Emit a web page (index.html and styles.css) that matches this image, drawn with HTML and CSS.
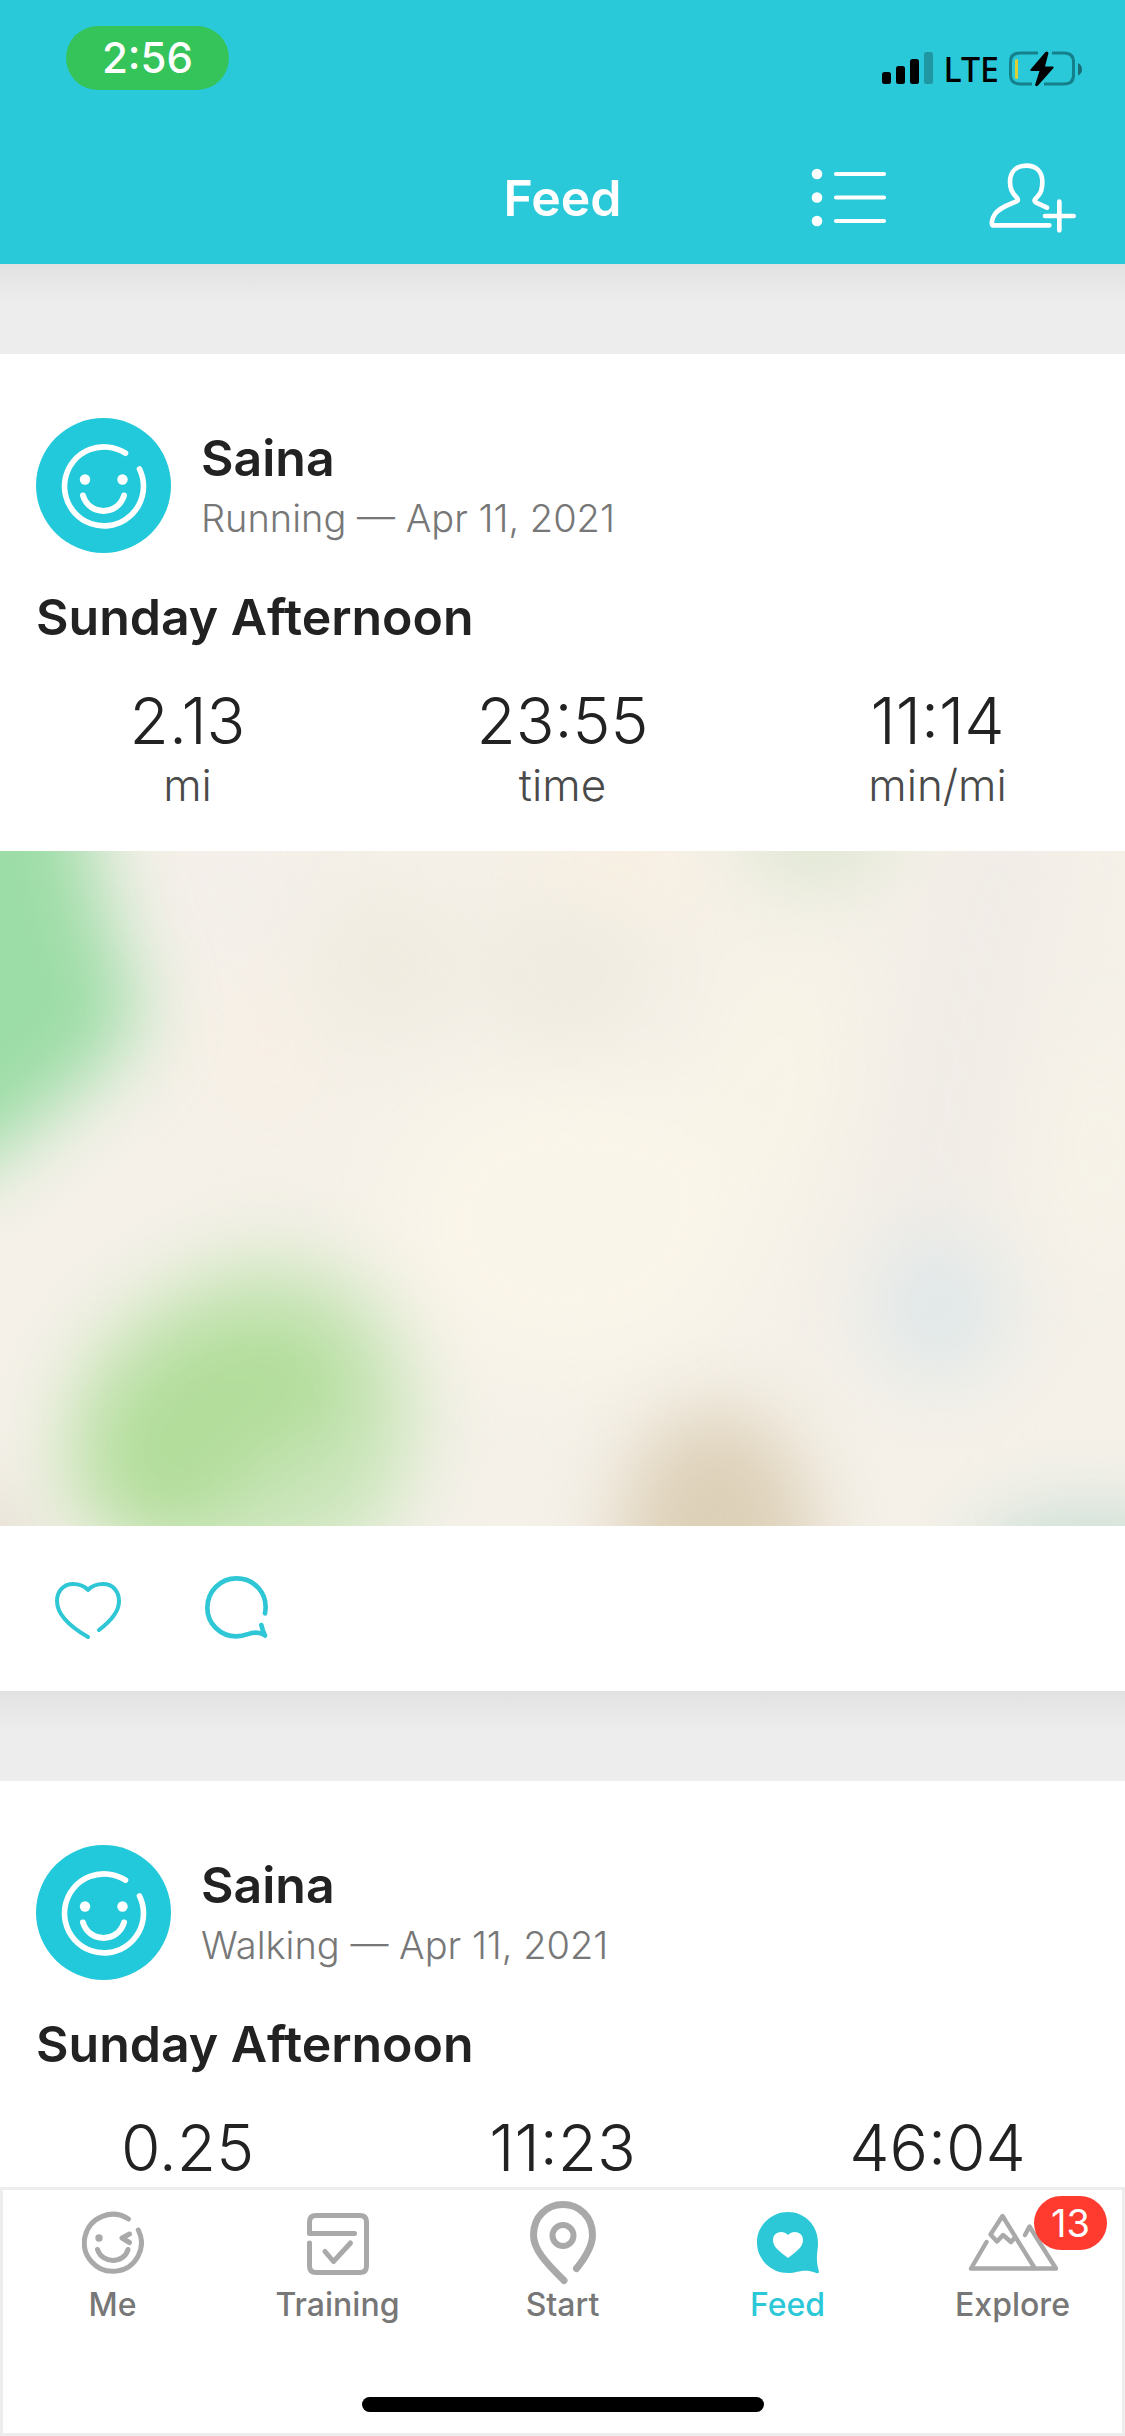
FILE: index.html
```html
<!DOCTYPE html>
<html lang="en">
<head>
<meta charset="utf-8">
<meta name="viewport" content="width=device-width, initial-scale=1">
<title>Feed</title>
<link rel="stylesheet" href="styles.css">
</head>
<body>
<svg class="defs" aria-hidden="true">
  <symbol id="smiley" viewBox="0 0 135 135">
    <circle cx="67.5" cy="67.5" r="67.5" fill="#22c9da"/>
    <g fill="none" stroke="#fff" stroke-width="5.6" stroke-linecap="round">
      <path d="M89.5 35.2A39.5 39.5 0 1 0 103.5 51"/>
      <path d="M47 77.5C53 98 82 98 88 77.5" stroke-width="6"/>
    </g>
    <circle cx="49" cy="61.5" r="5.2" fill="#fff"/>
    <circle cx="86.5" cy="61.5" r="5.2" fill="#fff"/>
  </symbol>
</svg>
<div class="app">
  <header class="header">
    <div class="status">
      <span class="clock">2:56</span>
      <div class="signals">
        <svg width="51" height="36" viewBox="0 0 51 36" aria-hidden="true">
          <rect x="0" y="21" width="9" height="12" rx="2.5"/>
          <rect x="14" y="15" width="9" height="18" rx="2.5"/>
          <rect x="28" y="8" width="9" height="25" rx="2.5"/>
          <rect x="42" y="1" width="9" height="32" rx="2.5" opacity=".25"/>
        </svg>
        <span class="carrier">LTE</span>
        <svg width="74" height="36" viewBox="0 0 74 36" aria-hidden="true">
          <path d="M29 2H11Q1.5 2 1.5 11V24Q1.5 33 11 33H23M43 2H55Q64.5 2 64.5 11V24Q64.5 33 55 33H35" fill="none" stroke="#14808b" stroke-width="3"/>
          <path d="M69 12Q73 14 73 18.5Q73 22.5 69 24.5Z" fill="#1b6d76"/>
          <rect x="6" y="8" width="3" height="20" rx="1.5" fill="#dccf33"/>
          <path d="M36.5 1L21.5 18.5Q21 20 22.5 20H30.5L26 34Q27 36 29 34.5L44.5 17Q45 15.5 43.5 15.5H36L39.5 2Q38.5 -.5 36.5 1Z"/>
        </svg>
      </div>
    </div>
    <div class="navbar">
      <h1 class="navbar-title">Feed</h1>
      <div class="navbar-actions">
        <button class="icon-button" aria-label="List">
          <svg width="76" height="60" viewBox="0 0 76 60" fill="#fff" stroke="#fff" stroke-linecap="round">
            <g stroke="none"><circle cx="6" cy="6" r="5.3"/><circle cx="6" cy="29.5" r="5.3"/><circle cx="6" cy="53" r="5.3"/></g>
            <path d="M25 6H73M25 29.5H73M25 53H73" stroke-width="4.2"/>
          </svg>
        </button>
        <button class="icon-button" aria-label="Add friend">
          <svg width="88" height="72" viewBox="628 485 264 216" fill="none" stroke="#fff" stroke-width="14" stroke-linecap="round" stroke-linejoin="round">
            <path d="M809 675H640C634 675 636 655 646 641C661 620 688 613 711 603C718 599 713 593 708 588C695 575 691 562 691 545C691 513 711 496 740 496C769 496 788 513 788 545C788 562 784 579 774 588C766 596 761 601 768 606L802 622M839 604V690M796 647H882"/>
          </svg>
        </button>
      </div>
    </div>
  </header>

  <main class="feed">
    <article class="card">
      <div class="card-body">
        <div class="author">
          <svg class="avatar" aria-hidden="true"><use href="#smiley"/></svg>
          <div>
            <h2 class="name">Saina</h2>
            <p class="meta">Running — Apr 11, 2021</p>
          </div>
        </div>
        <h3 class="title">Sunday Afternoon</h3>
      </div>
      <dl class="stats">
        <div class="stat"><dd class="value">2.13</dd><dt class="unit">mi</dt></div>
        <div class="stat"><dd class="value">23:55</dd><dt class="unit">time</dt></div>
        <div class="stat"><dd class="value">11:14</dd><dt class="unit">min/mi</dt></div>
      </dl>
      <svg class="map" viewBox="0 0 1125 675" preserveAspectRatio="none" role="img" aria-label="Route map">
        <defs>
          <filter id="soft" x="-80%" y="-80%" width="260%" height="260%" color-interpolation-filters="sRGB"><feGaussianBlur stdDeviation="38"/></filter>
          <filter id="softer" x="-80%" y="-80%" width="260%" height="260%" color-interpolation-filters="sRGB"><feGaussianBlur stdDeviation="50"/></filter>
        </defs>
        <rect width="1125" height="675" fill="#f5f1e9"/>
        <g filter="url(#softer)">
          <ellipse cx="570" cy="370" rx="190" ry="160" fill="#faf5e9"/>
          <ellipse cx="780" cy="210" rx="60" ry="130" fill="#f8f4e6"/>
          <ellipse cx="620" cy="20" rx="100" ry="50" fill="#faf0e1"/>
          <ellipse cx="265" cy="200" rx="40" ry="80" fill="#f9efe3"/>
          <ellipse cx="230" cy="40" rx="80" ry="60" fill="#f3eeea"/>
          <ellipse cx="1100" cy="300" rx="50" ry="130" fill="#f7f3e8"/>
        </g>
        <g filter="url(#soft)">
          <ellipse cx="387" cy="112" rx="70" ry="70" fill="#efebdf"/>
          <ellipse cx="565" cy="122" rx="85" ry="70" fill="#efebe0"/>
          <path d="M1020-40C970 90 960 200 930 350L900 520" fill="none" stroke="#f0ebe6" stroke-width="100"/>
          <ellipse cx="818" cy="-15" rx="75" ry="45" fill="#dce6d0"/>
          <path d="M-120-100H75C90 20 110 90 140 160C120 220 40 260 -20 320H-120Z" fill="#9cdca6"/>
          <ellipse cx="940" cy="458" rx="70" ry="75" fill="#e0e8e9"/>
          <ellipse cx="1090" cy="725" rx="120" ry="65" fill="#c5ddd4"/>
          <ellipse cx="-20" cy="695" rx="50" ry="45" fill="#e0d8cb"/>
        </g>
        <g filter="url(#soft)">
          <path d="M70 650C45 560 90 480 160 445C230 390 330 395 380 460C435 540 420 620 370 690C300 730 120 740 70 650Z" fill="#c9e5b9"/>
          <path d="M90 640C80 560 140 480 260 465C370 480 380 570 300 590C240 600 220 700 150 690Z" fill="#acdb92" opacity=".8"/>
          <path d="M615 760C610 620 650 560 717 560C785 560 820 620 820 760Z" fill="#ddd0b8"/>
        </g>
      </svg>
      <div class="actions">
        <button class="icon-button" aria-label="Like">
          <svg width="68" height="64" viewBox="162 222 204 192" fill="none" stroke="#2fc7d6" stroke-width="12" stroke-linecap="round" stroke-linejoin="round">
            <path d="M264 408C205 374 171 336 171 300C171 269 192 249 219 249C238 249 254 256 264 267C274 256 290 249 309 249C338 249 357 270 357 301C357 332 329 363 297 387"/>
          </svg>
        </button>
        <button class="icon-button" aria-label="Comment">
          <svg width="66" height="64" viewBox="612 222 198 192" fill="none" stroke="#2fc7d6" stroke-width="14" stroke-linecap="round" stroke-linejoin="round">
            <path d="M795 337C806 277 762 232 710 232C660 232 622 272 622 320C622 368 661 406 709 406C744 406 748 390 778 396Q789 398 795 404Q788 390 784 372"/>
          </svg>
        </button>
      </div>
    </article>

    <article class="card">
      <div class="card-body">
        <div class="author">
          <svg class="avatar" aria-hidden="true"><use href="#smiley"/></svg>
          <div>
            <h2 class="name">Saina</h2>
            <p class="meta">Walking — Apr 11, 2021</p>
          </div>
        </div>
        <h3 class="title">Sunday Afternoon</h3>
      </div>
      <ul class="stats">
        <li class="value">0.25</li>
        <li class="value">11:23</li>
        <li class="value">46:04</li>
      </ul>
    </article>
  </main>

  <nav class="tabbar">
    <div class="tabs">
      <a class="tab" href="#me">
        <svg class="tab-icon" width="62" height="84" viewBox="0 -11 62 84" fill="none" stroke="#a9a9a9" stroke-width="5" stroke-linecap="round" stroke-linejoin="round">
          <path d="M46.5 7A28.5 28.5 0 1 0 56.3 18M47.5 22L40 26L47.5 30.5M15.5 37.5C20 52 42 52 46 37.5"/>
          <circle cx="17" cy="26" r="3.7" fill="#a9a9a9" stroke="none"/>
        </svg>
        Me
      </a>
      <a class="tab" href="#training">
        <svg class="tab-icon" width="62" height="84" viewBox="0 -12 62 84" fill="none" stroke="#a9a9a9" stroke-width="5" stroke-linecap="round" stroke-linejoin="round">
          <path d="M47.5 20.5H2.5V9Q2.5 2.5 9 2.5H53Q59.5 2.5 59.5 9V53Q59.5 59.5 53 59.5H9Q2.5 59.5 2.5 53V30M18 38.5L26.5 48.5L43.5 30"/>
        </svg>
        Training
      </a>
      <a class="tab" href="#start">
        <svg class="tab-icon" width="66" height="84" viewBox="0 0 66 84" fill="none" stroke="#a9a9a9" stroke-width="7" stroke-linecap="round">
          <path d="M34 79.5C15 61 3.5 48 3.5 34C3.5 16 16.5 3.5 33 3.5C49.5 3.5 62.5 16 62.5 34C62.5 46 55 57 46.5 67.5"/>
          <circle cx="33" cy="34.5" r="10.5" stroke-width="6"/>
        </svg>
        Start
      </a>
      <a class="tab tab-active" href="#feed" aria-current="page">
        <svg class="tab-icon" width="62" height="84" viewBox="0 -11 62 84">
          <path d="M31 0C48 0 61 13.5 61 31C61 40 58 45 62 60Q61.5 62 59.5 61C46 56 42 61 31 61C14 61 0 47.5 0 30.5C0 13.5 14 0 31 0Z" fill="#2cc8d8"/>
          <path d="M31 46C22 39 16 35 16 28C16 20 26 17.5 31 23C36 17.5 46 20 46 28C46 35 40 39 31 46Z" fill="#fff"/>
        </svg>
        Feed
      </a>
      <a class="tab" href="#explore">
        <svg class="tab-icon" width="90" height="84" viewBox="0 -12 90 84" fill="none" stroke="#a9a9a9" stroke-width="4.4" stroke-linecap="round" stroke-linejoin="round">
          <path d="M18.5 29L3 55.5H88L61.5 13.5L57 22M66 54L34.5 3L22.5 21.5L29 28.5L35 22L43 29L46.5 25"/>
        </svg>
        Explore
        <span class="badge">13</span>
      </a>
    </div>
    <div class="home-indicator"></div>
  </nav>
</div>
</body>
</html>
```
FILE: styles.css
```css
* { box-sizing: border-box; }

body {
  margin: 0;
  font-family: Inter, "Noto Sans", sans-serif;
  color: #222;
  background: #fff;
}

h1, h2, h3, p, dl, dd, ul { margin: 0; padding: 0; }
ul { list-style: none; }
svg { display: block; flex: none; }

.defs { position: absolute; width: 0; height: 0; }

.app {
  display: flex;
  flex-direction: column;
  height: 100vh;
}

.header {
  flex: none;
  background: #2ac9d9;
}

.status {
  display: flex;
  justify-content: space-between;
  align-items: flex-start;
  height: 132px;
  padding: 26px 42px 0 66px;
}

.clock {
  width: 163px;
  border-radius: 32px;
  background: #35c459;
  color: #fff;
  font-size: 42px;
  font-weight: 500;
  line-height: 64px;
  text-align: center;
}

.signals {
  display: flex;
  align-items: center;
  gap: 10px;
  padding-top: 25px;
  color: #000;
}

.carrier {
  font-family: "Noto Sans", sans-serif;
  font-size: 34px;
  font-weight: 500;
  line-height: 36px;
}

.navbar {
  display: grid;
  grid-template-columns: 1fr auto 1fr;
  align-items: center;
  height: 132px;
  padding: 0 48px;
}

.navbar-title {
  grid-column: 2;
  color: #fff;
  font-size: 50px;
  font-weight: 600;
  line-height: 60px;
}

.navbar-actions {
  display: flex;
  align-items: center;
  justify-content: flex-end;
  gap: 102px;
}

.icon-button {
  padding: 0;
  border: 0;
  background: none;
}

.feed {
  flex: 1;
  min-height: 0;
  overflow-y: auto;
  scrollbar-width: none;
}

.card::before {
  content: "";
  display: block;
  height: 90px;
  background: linear-gradient(#e2e2e2, #ededed 40px);
}

.card-body { padding: 64px 36px 0; }

.author {
  display: flex;
  align-items: center;
  gap: 30px;
}

.avatar { width: 135px; height: 135px; }

.name,
.title {
  font-size: 50px;
  font-weight: 600;
  line-height: 64px;
}

.title { padding-top: 32px; }

.meta {
  color: #777;
  font-size: 38px;
  font-weight: 300;
  line-height: 56px;
}

.stats {
  display: grid;
  grid-template-columns: repeat(3, 1fr);
  padding-top: 32px;
  text-align: center;
}

.value {
  font-size: 64px;
  font-weight: 300;
  line-height: 80px;
}

.unit {
  color: #4a4a4a;
  font-size: 44px;
  font-weight: 300;
  line-height: 48px;
}

.map {
  width: 100%;
  height: 675px;
  margin-top: 42px;
}

.actions {
  display: flex;
  gap: 82px;
  padding: 49px 54px 52px;
}

.tabbar {
  flex: none;
  height: 249px;
  border: 3px solid #ededed;
  background: #fff;
}

.tabs {
  display: grid;
  grid-template-columns: repeat(5, 1fr);
  margin: 0 -3px;
}

.tab {
  position: relative;
  display: flex;
  flex-direction: column;
  align-items: center;
  padding-top: 11px;
  color: #777;
  font-size: 32px;
  font-weight: 500;
  line-height: 40px;
  text-decoration: none;
}

.tab-active { color: #2cc8d8; }

.badge {
  position: absolute;
  top: 6px;
  right: 18px;
  width: 73px;
  border-radius: 27px;
  background: #ff3b30;
  color: #fff;
  font-size: 38px;
  font-weight: 400;
  line-height: 54px;
  text-align: center;
}

.home-indicator {
  width: 402px;
  height: 15px;
  margin: 72px auto 0;
  border-radius: 8px;
  background: #000;
}
```
